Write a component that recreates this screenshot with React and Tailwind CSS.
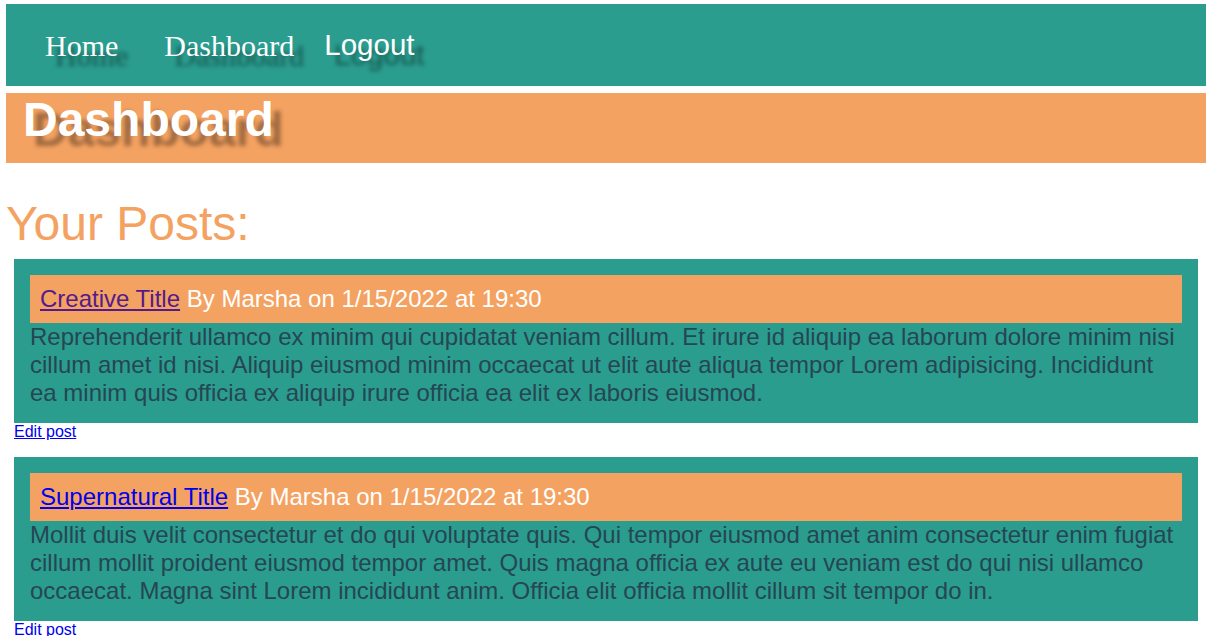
const posts = [
  {
    title: "Creative Title",
    visited: true,
    author: "Marsha",
    date: "1/15/2022 at 19:30",
    body: "Reprehenderit ullamco ex minim qui cupidatat veniam cillum. Et irure id aliquip ea laborum dolore minim nisi cillum amet id nisi. Aliquip eiusmod minim occaecat ut elit aute aliqua tempor Lorem adipisicing. Incididunt ea minim quis officia ex aliquip irure officia ea elit ex laboris eiusmod.",
  },
  {
    title: "Supernatural Title",
    visited: false,
    author: "Marsha",
    date: "1/15/2022 at 19:30",
    body: "Mollit duis velit consectetur et do qui voluptate quis. Qui tempor eiusmod amet anim consectetur enim fugiat cillum mollit proident eiusmod tempor amet. Quis magna officia ex aute eu veniam est do qui nisi ullamco occaecat. Magna sint Lorem incididunt anim. Officia elit officia mollit cillum sit tempor do in.",
  },
];

export default function App() {
  return (
    <div className="bg-white min-h-[636px] pt-[4px] font-['Liberation_Sans',Arial,sans-serif]">
      {/* Nav */}
      <nav className="ml-[6px] mr-[8px] h-[82px] bg-[#2a9d8f] flex items-center pl-[39px] text-white">
        <a className="font-['Liberation_Serif',serif] text-[30px] [text-shadow:10px_10px_4px_rgba(0,0,0,0.45)]">Home</a>
        <a className="ml-[46px] font-['Liberation_Serif',serif] text-[30px] [text-shadow:10px_10px_4px_rgba(0,0,0,0.45)]">Dashboard</a>
        <a className="ml-[30px] text-[29.5px] [text-shadow:10px_10px_4px_rgba(0,0,0,0.45)]">Logout</a>
      </nav>

      {/* Page header */}
      <header className="ml-[6px] mr-[8px] mt-[7px] h-[70px] bg-[#f4a261] pl-[17px]">
        <h1 className="text-[48px] font-bold text-white leading-[54px] [text-shadow:10px_10px_4px_rgba(0,0,0,0.35)]">
          Dashboard
        </h1>
      </header>

      <h2 className="ml-[6px] mt-[34px] text-[48px] leading-[54px] text-[#f4a261]">Your Posts:</h2>

      <div className="mt-[8px]">
        {posts.map((post) => (
          <div key={post.title} className="mb-[16px]">
            <div className="ml-[14px] mr-[16px] bg-[#2a9d8f] p-[16px]">
              <div className="h-[48px] bg-[#f4a261] flex items-center pl-[10px] text-[24px] text-white">
                <a
                  href="#"
                  className={post.visited ? "text-[#551a8b] underline" : "text-[#0000ee] underline"}
                >
                  {post.title}
                </a>
                <span className="whitespace-pre"> By {post.author} on {post.date}</span>
              </div>
              <p className="text-[24px] leading-[28px] text-[#264653]">{post.body}</p>
            </div>
            <div className="ml-[14px] text-[16px] leading-[18px]">
              <a href="#" className="text-[#0000ee] underline">
                Edit post
              </a>
            </div>
          </div>
        ))}
      </div>
    </div>
  );
}
